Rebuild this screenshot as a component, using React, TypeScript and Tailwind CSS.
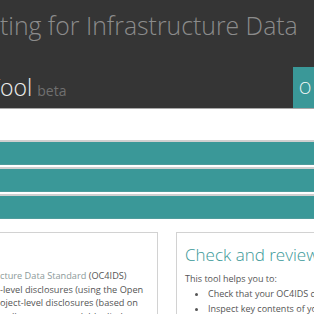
export default function App() {
  const font = { fontFamily: '"Open Sans", "Liberation Sans", sans-serif' };
  return (
    <div className="w-[314px] h-[314px] overflow-hidden bg-white" style={font}>
      {/* Header */}
      <div className="bg-[#353535] h-[108px] flex flex-col">
        <div className="h-[67px] pt-[10px] whitespace-nowrap text-[24.8px] leading-[30px] font-light text-[#8c8c8c]">
          ting for Infrastructure Data
        </div>
        <div className="flex-1 flex items-stretch">
          <div className="flex-1 flex items-end pb-[9px] whitespace-nowrap overflow-hidden">
            <span className="-ml-[12px] text-[23px] leading-[24px] font-light text-[#eeeeee]">Tool</span>
            <span className="ml-[5px] text-[14px] leading-[16px] text-[#707070]">beta</span>
          </div>
          <div className="w-[21px] bg-[#3a9898] flex items-center pl-[6px] overflow-hidden">
            <span className="text-[16px] text-white font-light">O</span>
          </div>
        </div>
      </div>
      <div className="h-[1px] bg-[#a8a8a8]" />

      {/* Accordion bars */}
      <div className="pt-[31px] flex flex-col gap-[2px]">
        {[0, 1, 2].map((i) => (
          <div key={i} className="border-t-[2px] border-[#cfcfcf] h-[25px] bg-[#3a9898] border-b border-b-[#4f9c9c]" />
        ))}
      </div>

      {/* Cards */}
      <div className="mt-[13px] flex gap-[18px]">
        <div className="w-[158px] h-[120px] border border-l-0 border-[#d2d2d2] pt-[36px] text-[9.2px] leading-[13.5px] text-[#555] whitespace-nowrap overflow-hidden">
          <div><span className="text-[#8c9a9a]">cture Data Standard</span> (OC4IDS)</div>
          <div>-level disclosures (using the Open</div>
          <div>oject-level disclosures (based on</div>
          <div>ard) to support scalable disclosure</div>
        </div>
        <div className="flex-1 h-[120px] border border-r-0 border-[#d2d2d2] pl-[8px] pt-[10px] whitespace-nowrap overflow-hidden">
          <div className="text-[17px] leading-[24px] font-light text-[#3a9898]">Check and review</div>
          <div className="mt-[5px] text-[9px] leading-[13px] text-[#555]">This tool helps you to:</div>
          <ul className="mt-[1px] pl-[23px] text-[9px] leading-[15px] text-[#555] list-disc">
            <li>Check that your OC4IDS data</li>
            <li>Inspect key contents of your data</li>
          </ul>
        </div>
      </div>
    </div>
  );
}
